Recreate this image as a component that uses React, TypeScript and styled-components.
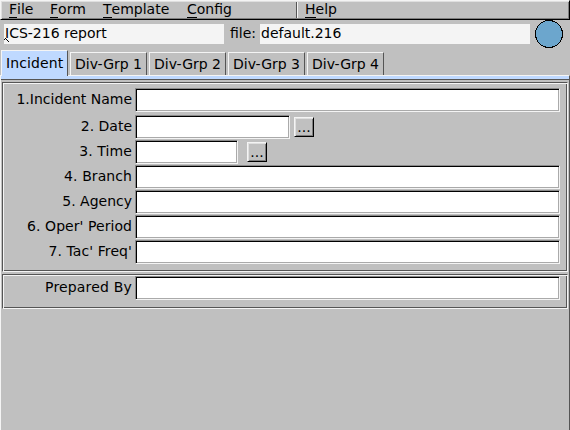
import React from "react";
import styled, { createGlobalStyle } from "styled-components";

const Global = createGlobalStyle`
  * { box-sizing: border-box; }
  body { margin: 0; background: #c0c0c0; }
`;

const Window = styled.div`
  width: 570px;
  height: 430px;
  overflow: hidden;
  display: flex;
  flex-direction: column;
  background: #c0c0c0;
  color: #000;
  font: 14px/18px "DejaVu Sans", sans-serif;
  white-space: pre;
`;

const MenuBar = styled.nav`
  height: 20px;
  flex: none;
  display: flex;
  border: 1px solid;
  border-color: #f4f4f4 #000 #000 #f4f4f4;
  box-shadow: inset 1px 1px #dfdfdf, inset -1px -1px #7f7f7f;
`;

const MenuItem = styled.div<{ $width: number; $divided?: boolean }>`
  width: ${(p) => p.$width}px;
  height: 16px;
  margin-top: 1px;
  line-height: 15px;
  padding-left: 8px;
  border-left: ${(p) => (p.$divided ? "1px solid #555" : "0")};
  box-shadow: ${(p) => (p.$divided ? "inset 1px 0 #f4f4f4" : "none")};
`;

const Mnemonic = styled.span`
  display: inline-block;
  height: 16px;
  border-bottom: 1px solid #000;
`;

const Header = styled.header`
  height: 30px;
  flex: none;
  display: flex;
  align-items: flex-start;
  padding-left: 4px;
`;

const Output = styled.div<{ $width: number }>`
  position: relative;
  width: ${(p) => p.$width}px;
  height: 20px;
  margin-top: 4px;
  padding-left: 1px;
  line-height: 19px;
  background: #f4f4f4;
`;

const Caret = styled.svg`
  position: absolute;
  left: 0;
  top: 14px;
`;

const FileLabel = styled.div`
  width: 36px;
  margin-top: 4px;
  padding-left: 6px;
  line-height: 19px;
`;

const Lamp = styled.svg`
  margin-left: 5px;
`;

const Tabs = styled.div`
  height: 25px;
  flex: none;
  display: flex;
  align-items: flex-end;
  gap: 2px;
  padding-left: 1px;
`;

const Tab = styled.div<{ $width: number; $active?: boolean }>`
  width: ${(p) => p.$width}px;
  height: ${(p) => (p.$active ? 26 : 23)}px;
  margin-bottom: ${(p) => (p.$active ? -1 : 0)}px;
  padding-left: 4px;
  line-height: ${(p) => (p.$active ? 24 : 22)}px;
  letter-spacing: ${(p) => (p.$active ? 0.1 : 0)}px;
  background: ${(p) => (p.$active ? "#bfd9ff" : "#c0c0c0")};
  border: solid;
  border-width: 1px 1px 0 1px;
  border-color: #f4f4f4 #555 #555 #f4f4f4;
  position: relative;
`;

const Page = styled.main`
  flex: 1;
  border-left: 1px solid #f4f4f4;
  border-right: 1px solid #555;
  border-top: 1px solid #f4f4f4;
`;

const Accent = styled.div`
  height: 4px;
  background: #bfd9ff;
  border-bottom: 1px solid #555;
`;

const Group = styled.section<{ $height: number; $pad: number }>`
  height: ${(p) => p.$height}px;
  margin: 2px 1px 0;
  padding: ${(p) => p.$pad}px 0 0 3px;
  border: 1px solid;
  border-color: #555 #f4f4f4 #f4f4f4 #555;
  box-shadow: inset 1px 1px #f4f4f4, inset -1px -1px #555;
`;

const Row = styled.div<{ $after?: number }>`
  height: 23px;
  margin-bottom: ${(p) => p.$after ?? 2}px;
  display: flex;
`;

const Label = styled.label<{ $tracking?: number }>`
  width: 129px;
  flex: none;
  padding-right: 3px;
  text-align: right;
  line-height: 22px;
  letter-spacing: ${(p) => p.$tracking ?? 0}px;
`;

const Field = styled.div<{ $width: number }>`
  width: ${(p) => p.$width}px;
  height: 24px;
  flex: none;
  background: #fff;
  border: 1px solid;
  border-color: #8a8a8a #f4f4f4 #f4f4f4 #8a8a8a;
  box-shadow: inset 1px 1px #000, inset -1px -1px #aaa;
`;

const Browse = styled.button<{ $gap: number }>`
  width: 20px;
  height: 20px;
  margin: 2px 0 0 ${(p) => p.$gap}px;
  padding: 0;
  border: 1px solid;
  border-color: #f4f4f4 #000 #000 #f4f4f4;
  box-shadow: inset 1px 1px #dfdfdf, inset -1px -1px #7f7f7f;
  background: #c0c0c0;
  color: #000;
  font: 14px/18px "DejaVu Sans", sans-serif;
`;

const menus = [
  { name: "File", width: 41 },
  { name: "Form", width: 53 },
  { name: "Template", width: 84 },
  { name: "Config", width: 117 },
  { name: "Help", width: 80, divided: true },
];
const tabs = [
  { name: "Incident", width: 67, active: true },
  { name: "Div-Grp 1", width: 77 },
  { name: "Div-Grp 2", width: 77 },
  { name: "Div-Grp 3", width: 77 },
  { name: "Div-Grp 4", width: 77 },
];
const fields = [
  { label: "1.Incident Name", width: 425, after: 4 },
  { label: "2. Date", width: 155, browse: 4 },
  { label: "3. Time", width: 103, browse: 9, tracking: 0.1 },
  { label: "4. Branch", width: 425, tracking: 0.08 },
  { label: "5. Agency", width: 425 },
  { label: "6. Oper' Period", width: 425, tracking: 0.06 },
  { label: "7. Tac' Freq'", width: 425, tracking: 0.08 },
];

export default function App() {
  return (
    <Window>
      <Global />
      <MenuBar>
        {menus.map((m) => (
          <MenuItem key={m.name} $width={m.width} $divided={m.divided}>
            <Mnemonic>{m.name[0]}</Mnemonic>{m.name.slice(1)}
          </MenuItem>
        ))}
      </MenuBar>
      <Header>
        <Output $width={220}>
          ICS-216 report
          <Caret width="5" height="4" shapeRendering="crispEdges">
            <path d="M0 1h1v1h-1zM1 0h1v1h-1zM2 1h1v1h-1zM3 2h1v1h-1zM4 3h1v1h-1z" />
          </Caret>
        </Output>
        <FileLabel>file:</FileLabel>
        <Output $width={270}>default.216</Output>
        <Lamp width="28" height="28" shapeRendering="crispEdges">
          <circle cx="14" cy="14" r="13.5" fill="#6ca6cd" stroke="#000" />
        </Lamp>
      </Header>
      <Tabs>
        {tabs.map((t) => (
          <Tab key={t.name} $width={t.width} $active={t.active}>{t.name}</Tab>
        ))}
      </Tabs>
      <Page>
        <Accent />
        <Group $height={190} $pad={5}>
          {fields.map((f) => (
            <Row key={f.label} $after={f.after}>
              <Label $tracking={f.tracking}>{f.label}</Label>
              <Field $width={f.width} />
              {f.browse && <Browse $gap={f.browse}>...</Browse>}
            </Row>
          ))}
        </Group>
        <Group $height={35} $pad={1}>
          <Row>
            <Label $tracking={0.18}>Prepared By</Label>
            <Field $width={425} />
          </Row>
        </Group>
      </Page>
    </Window>
  );
}
